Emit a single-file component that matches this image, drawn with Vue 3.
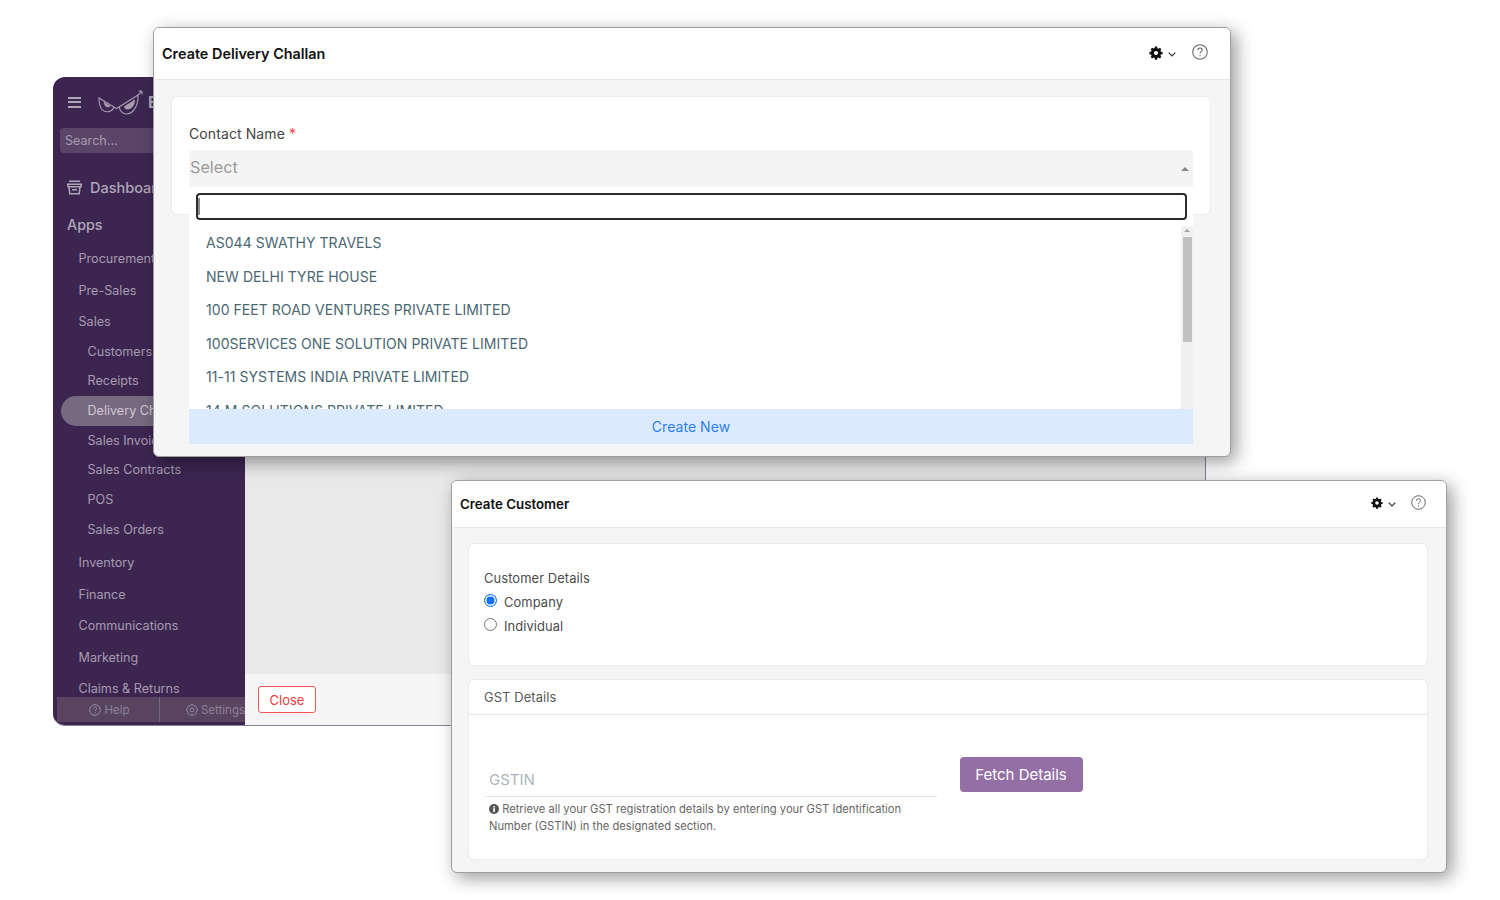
<script setup>
const apps1 = ['Procurement', 'Pre-Sales', 'Sales']
const sales = ['Customers', 'Receipts', 'Delivery Challans', 'Sales Invoices', 'Sales Contracts', 'POS', 'Sales Orders']
const apps2 = ['Inventory', 'Finance', 'Communications', 'Marketing', 'Claims & Returns']
const options = [
  'AS044 SWATHY TRAVELS',
  'NEW DELHI TYRE HOUSE',
  '100 FEET ROAD VENTURES PRIVATE LIMITED',
  '100SERVICES ONE SOLUTION PRIVATE LIMITED',
  '11-11 SYSTEMS INDIA PRIVATE LIMITED',
  '14 M SOLUTIONS PRIVATE LIMITED'
]
const gear = 'M6.800 .6h2.400l.4 1.900 1.200.5 1.600-1 1.700 1.700-1 1.600.5 1.200 1.900.4v2.400l-1.900.4-.5 1.200 1 1.600-1.700 1.700-1.600-1-1.200.5-.4 1.900H6.800l-.4-1.900-1.200-.5-1.600 1-1.700-1.700 1-1.600-.5-1.200-1.900-.4V6.800l1.900-.4.5-1.200-1-1.600 1.700-1.700 1.600 1 1.200-.5zM8 5.600a2.400 2.400 0 1 0 0 4.800 2.400 2.400 0 0 0 0-4.800z'
</script>

<template>
  <div class="canvas">
    <!-- background window -->
    <section class="bg-window">
      <aside class="sidebar">
        <div class="brand">
          <div class="burger"><i></i><i></i><i></i></div>
          <svg class="owl" width="50" height="30" viewBox="0 0 50 30" fill="none" stroke="#a79bb1" stroke-width="1.100">
            <path d="M2 11l15 9c-1.500 5-8.500 6.500-12 2.500C3 20 2 15 2 11z" />
            <path d="M6.500 14.500L13.500 19c-1.500 2.500-6 2-7-4.500z" fill="#a79bb1" stroke="none" />
            <path d="M22 20l19-12c.5 10-4 18-11 19-4 .5-7-3-8-7z" />
            <path d="M27 19.500l11-7c0 6-3.500 10-7.500 10-2 0-3.500-1.500-3.500-3z" fill="#a79bb1" stroke="none" />
            <path d="M17 20l2.500 1.500L22 20M41 8l4-4M45 4l-3.500 0M45 4v3.500" />
          </svg>
          <span class="brand-letter">E</span>
        </div>
        <div class="search">Search...</div>
        <div class="dash">
          <svg width="17" height="15" viewBox="0 0 17 15" fill="none" stroke="#b0a6b9" stroke-width="1.500">
            <path d="M3 1.200h11M1 4.200h15M2 4.200v2.600h13V4.200M3 6.800l.8 7h9.400l.8-7" />
            <path d="M6 9.800h5" />
          </svg>
          <span>Dashboard</span>
        </div>
        <div class="apps">Apps</div>
        <nav class="nav">
          <div v-for="a in apps1" :key="a" class="top">{{ a }}</div>
          <div class="subs">
            <div v-for="s in sales" :key="s" class="sub" :class="{ active: s === 'Delivery Challans' }">{{ s }}</div>
          </div>
          <div class="after">
            <div v-for="a in apps2" :key="a" class="top">{{ a }}</div>
          </div>
        </nav>
        <div class="side-foot">
          <div class="foot-cell help">
            <svg width="12" height="12" viewBox="0 0 12 12" fill="none" stroke="#9b8fa6"><circle cx="6" cy="6" r="5.300" /><path d="M4.400 4.700c0-2.200 3.300-2.200 3.300-.2 0 1.200-1.700 1.300-1.700 2.600M6 8.300v1" /></svg>
            <span>Help</span>
          </div>
          <div class="foot-cell settings">
            <svg width="12" height="12" viewBox="0 0 16 16" fill="none" stroke="#9b8fa6" stroke-width="1.200"><path :d="gear" /></svg>
            <span>Settings</span>
          </div>
        </div>
      </aside>
      <main class="bg-main">
        <div class="bg-body"></div>
        <div class="bg-foot"><button class="close">Close</button></div>
      </main>
    </section>

    <!-- Create Delivery Challan -->
    <section class="modal challan">
      <header class="modal-head head-a">
        <h2>Create Delivery Challan</h2>
        <div class="head-tools">
          <svg class="gear" width="14" height="14" viewBox="0 0 16 16" fill="#111"><path fill-rule="evenodd" :d="gear" /></svg>
          <svg class="chev" width="8" height="5" viewBox="0 0 8 5" fill="none" stroke="#333" stroke-width="1.200"><path d="M.7.700L4 4l3.300-3.300" /></svg>
          <svg class="qm" width="16" height="16" viewBox="0 0 15 15" fill="none" stroke="#666"><circle cx="7.500" cy="7.500" r="6.800" /><path d="M5.500 5.800c0-2.700 4.100-2.700 4.100-.2 0 1.500-2.100 1.600-2.100 3.300M7.500 10.300v1.200" /></svg>
        </div>
      </header>
      <div class="modal-body body-a">
        <div class="card contact">
          <label class="contact-label">Contact Name <em>*</em></label>
          <div class="select"><span>Select</span><b class="caret"></b></div>
        </div>
        <div class="dropdown">
          <div class="search-wrap"><div class="search-input"><i class="cursor"></i></div></div>
          <div class="list-wrap">
            <ul class="list">
              <li v-for="o in options" :key="o">{{ o }}</li>
            </ul>
            <div class="scrollbar"><b class="up"></b><i class="thumb"></i></div>
          </div>
          <div class="create-new">Create New</div>
        </div>
      </div>
    </section>

    <!-- Create Customer -->
    <section class="modal customer">
      <header class="modal-head head-b">
        <h2>Create Customer</h2>
        <div class="head-tools tools-b">
          <svg width="12" height="12" viewBox="0 0 16 16" fill="#111"><path fill-rule="evenodd" :d="gear" /></svg>
          <svg class="chev" width="8" height="5" viewBox="0 0 8 5" fill="none" stroke="#333" stroke-width="1.200"><path d="M.7.700L4 4l3.300-3.300" /></svg>
          <svg class="qm-b" width="15" height="15" viewBox="0 0 15 15" fill="none" stroke="#666"><circle cx="7.500" cy="7.500" r="6.800" /><path d="M5.500 5.800c0-2.700 4.100-2.700 4.100-.2 0 1.500-2.100 1.600-2.100 3.300M7.500 10.300v1.200" /></svg>
        </div>
      </header>
      <div class="modal-body body-b">
        <div class="card details">
          <div class="det-title">Customer Details</div>
          <div class="radio-row"><i class="radio on"></i><span>Company</span></div>
          <div class="radio-row"><i class="radio"></i><span>Individual</span></div>
        </div>
        <div class="card gst">
          <div class="gst-head">GST Details</div>
          <div class="gst-body">
            <div class="gst-field">
              <div class="gstin">GSTIN</div>
              <p class="hint">
                <svg width="10" height="10" viewBox="0 0 10 10"><circle cx="5" cy="5" r="5" fill="#555" /><rect x="4.200" y="4.200" width="1.700" height="3.800" fill="#fff" /><rect x="4.200" y="2" width="1.700" height="1.500" fill="#fff" /></svg>
                Retrieve all your GST registration details by entering your GST Identification Number (GSTIN) in the designated section.
              </p>
            </div>
            <button class="fetch">Fetch Details</button>
          </div>
        </div>
      </div>
    </section>
  </div>
</template>

<style scoped>
.canvas {
  position: relative;
  width: 1500px;
  height: 900px;
  overflow: hidden;
  background: #fff;
  font-family: Inter, "Liberation Sans", sans-serif;
}
.bg-window {
  position: absolute;
  left: 53px;
  top: 77px;
  width: 1153px;
  height: 649px;
  display: flex;
  border-radius: 12px 0 0 12px;
  overflow: hidden;
  border-bottom: 1px solid #8d7f9b;
  border-right: 1px solid #8d7f9b;
  box-sizing: border-box;
}
.sidebar {
  width: 192px;
  flex: none;
  background: #3c2650;
  color: #a79bb1;
  position: relative;
  overflow: hidden;
  font-size: 12.600px;
}
.brand {
  height: 51px;
  display: flex;
  align-items: center;
  padding-left: 15px;
  padding-bottom: 1px;
  box-sizing: border-box;
}
.burger {
  width: 13px;
  display: flex;
  flex-direction: column;
  gap: 2.500px;
}
.burger i {
  display: block;
  height: 2px;
  background: #b0a6b9;
}
.owl {
  margin-left: 16px;
  flex: none;
}
.brand-letter {
  margin-left: 1px;
  font-size: 16px;
  font-weight: 700;
  color: #b0a6b9;
}
.search {
  margin: 0 0 0 7px;
  width: 170px;
  height: 25px;
  line-height: 25px;
  padding-left: 5px;
  box-sizing: border-box;
  background: #5a4569;
  border-radius: 4px;
  font-size: 12.600px;
  color: #a79bb1;
}
.dash {
  display: flex;
  align-items: center;
  gap: 7px;
  margin: 22px 0 0 13px;
  height: 24px;
  font-size: 14.500px;
  font-weight: 500;
  color: #b0a6b9;
}
.dash span { white-space: nowrap; }
.apps {
  margin: 14px 0 0 14px;
  height: 24px;
  line-height: 24px;
  font-size: 14.300px;
  font-weight: 500;
  color: #b0a6b9;
}
.nav {
  margin-top: 6px;
  white-space: nowrap;
}
.top {
  height: 31.500px;
  line-height: 31.500px;
  padding-left: 25.500px;
}
.subs { margin-top: -1px; }
.sub {
  height: 29.700px;
  line-height: 29.700px;
  padding-left: 34.500px;
}
.sub.active {
  margin-left: 7.500px;
  padding-left: 27px;
  background: #776a80;
  color: #cfc9d3;
  border-radius: 15px 0 0 15px;
}
.after { margin-top: 3px; }
.side-foot {
  position: absolute;
  left: 4px;
  right: 0;
  top: 620px;
  height: 25px;
  display: flex;
  background: #58445f;
  font-size: 11.500px;
  color: #8d8096;
}
.foot-cell {
  display: flex;
  align-items: center;
  gap: 3px;
  white-space: nowrap;
}
.help {
  width: 105px;
  justify-content: center;
  padding-left: 3px;
  border-right: 1px solid #76667f;
  box-sizing: border-box;
}
.settings { padding-left: 26px; }
.bg-main {
  flex: 1;
  display: flex;
  flex-direction: column;
}
.bg-body {
  flex: 1;
  background: #e9e9e9;
}
.bg-foot {
  height: 52px;
  background: #f5f5f5;
  border-top: 1px solid #eaeaea;
  box-sizing: border-box;
  padding: 12px 0 0 13px;
}
.close {
  width: 58px;
  height: 27px;
  padding: 0;
  background: #fff;
  border: 1px solid #f05656;
  border-radius: 3px;
  color: #ec3b3b;
  font: 13px Inter, "Liberation Sans", sans-serif;
}
.modal {
  position: absolute;
  box-sizing: border-box;
  background: #f5f5f5;
  border: 1px solid #9e9e9e;
  box-shadow: 5px 5px 18px rgba(0, 0, 0, 0.4);
  display: flex;
  flex-direction: column;
  overflow: hidden;
}
.challan {
  left: 153px;
  top: 27px;
  width: 1078px;
  height: 430px;
  border-radius: 6px;
}
.customer {
  left: 451px;
  top: 480px;
  width: 996px;
  height: 393px;
  border-radius: 6px;
}
.modal-head {
  background: #fff;
  border-bottom: 1px solid #e8e8e8;
  display: flex;
  align-items: center;
  justify-content: space-between;
  box-sizing: border-box;
  flex: none;
}
.modal-head h2 {
  margin: 0;
  font-weight: 600;
  color: #111;
}
.head-a {
  height: 52px;
  padding: 0 22px 0 8px;
}
.head-a h2 {
  font-size: 14.400px;
  margin-top: -1px;
}
.head-b {
  height: 47px;
  padding: 0 20px 0 8px;
}
.head-b h2 {
  font-size: 13.300px;
  margin-top: -1px;
}
.head-tools {
  display: flex;
  align-items: center;
  margin-top: -2px;
}
.tools-b { margin-top: -2px; }
.gear { margin-top: 1px; }
.chev { margin-left: 5px; margin-top: 3px; }
.qm { margin-left: 16px; margin-top: -2px; }
.qm-b { margin-left: 15px; margin-top: -1px; }
.modal-body {
  flex: 1;
  position: relative;
}
.card {
  background: #fff;
  border-radius: 5px;
  box-shadow: 0 0 2px rgba(0, 0, 0, 0.14);
}
.body-a { padding: 17px 20px 0 18px; }
.contact {
  height: 117px;
  padding: 28px 17px 0 17px;
  box-sizing: border-box;
}
.contact-label {
  display: block;
  font-size: 14px;
  line-height: 17px;
  color: #444;
  letter-spacing: 0.1px;
}
.contact-label em {
  color: #ef4444;
  font-style: normal;
}
.select {
  margin-top: 8px;
  height: 38px;
  background: #f4f4f4;
  display: flex;
  align-items: center;
  justify-content: space-between;
  padding: 0 4px 4px 1px;
  box-sizing: border-box;
  font-size: 16.200px;
  color: #9a9a9a;
}
.caret {
  width: 0;
  height: 0;
  margin-top: 4px;
  border: 4px solid transparent;
  border-top: 0;
  border-bottom: 4px solid #888;
}
.dropdown {
  position: absolute;
  left: 35px;
  top: 107px;
  width: 1004px;
  height: 257px;
  background: #fff;
  display: flex;
  flex-direction: column;
  overflow: hidden;
}
.search-wrap {
  height: 39px;
  padding: 6px 6px 0 7px;
  box-sizing: border-box;
  flex: none;
}
.search-input {
  height: 27px;
  box-sizing: border-box;
  border: 2px solid #2b2b2b;
  border-radius: 4px;
  position: relative;
}
.cursor {
  position: absolute;
  left: 0;
  top: 3px;
  width: 2px;
  height: 17px;
  background: #8a8a8a;
}
.list-wrap {
  flex: 1;
  display: flex;
  overflow: hidden;
  min-height: 0;
}
.list {
  flex: 1;
  margin: 0;
  padding: 0 0 0 17px;
  list-style: none;
}
.list li {
  height: 33.500px;
  line-height: 33.400px;
  font-size: 14px;
  letter-spacing: 0.05px;
  color: #4a6772;
  white-space: nowrap;
}
.scrollbar {
  width: 12px;
  background: #f0f0f0;
  position: relative;
  flex: none;
}
.up {
  position: absolute;
  left: 3px;
  top: 3px;
  width: 0;
  height: 0;
  border: 3px solid transparent;
  border-top: 0;
  border-bottom: 3px solid #a3a3a3;
}
.thumb {
  position: absolute;
  left: 2px;
  top: 11px;
  width: 9px;
  height: 105px;
  background: #c1c1c1;
}
.create-new {
  height: 35px;
  line-height: 35px;
  flex: none;
  text-align: center;
  background: #dbeafe;
  color: #2f80ed;
  font-size: 14px;
  letter-spacing: 0.05px;
}
.body-b { padding: 16px 19px 0 17px; }
.details {
  height: 121px;
  padding: 26px 15px 0 15px;
  box-sizing: border-box;
  font-size: 12.900px;
  color: #4b4b4b;
}
.det-title { line-height: 16px; letter-spacing: 0.1px; margin-top: 1px; }
.radio-row {
  display: flex;
  align-items: center;
  height: 24px;
  letter-spacing: 0.1px;
}
.det-title + .radio-row { margin-top: 3px; }
.radio {
  width: 13px;
  height: 13px;
  box-sizing: border-box;
  border: 1px solid #767676;
  border-radius: 50%;
  margin-right: 7px;
  margin-top: -3px;
  background: #fff;
}
.radio.on {
  border: 1px solid #1d7bf5;
  background: #0d6efd;
  box-shadow: inset 0 0 0 1.500px #fff;
}
.gst {
  margin-top: 15px;
  height: 179px;
}
.gst-head {
  height: 35px;
  line-height: 35px;
  padding-left: 15px;
  border-bottom: 1px solid #e8e8e8;
  box-sizing: border-box;
  font-size: 12.900px;
  color: #5a5a5a;
  letter-spacing: 0.1px;
}
.gst-body {
  display: flex;
  padding: 42px 0 0 15px;
  align-items: flex-start;
}
.gst-field { width: 452.500px; }
.gstin {
  height: 40px;
  line-height: 46px;
  padding-left: 5px;
  box-sizing: border-box;
  border-bottom: 1px solid #e6e6e6;
  font-size: 15px;
  color: #b0b5ba;
}
.hint {
  margin: 4px 0 0;
  padding: 0 16px 0 5px;
  font-size: 11.200px;
  line-height: 17px;
  color: #666;
}
.hint svg { vertical-align: -1px; }
.fetch {
  margin-left: 23px;
  width: 123px;
  height: 35px;
  padding: 0;
  border: 0;
  border-radius: 4px;
  background: #946fa6;
  color: #fff;
  font: 400 15px Inter, "Liberation Sans", sans-serif;
}
</style>
